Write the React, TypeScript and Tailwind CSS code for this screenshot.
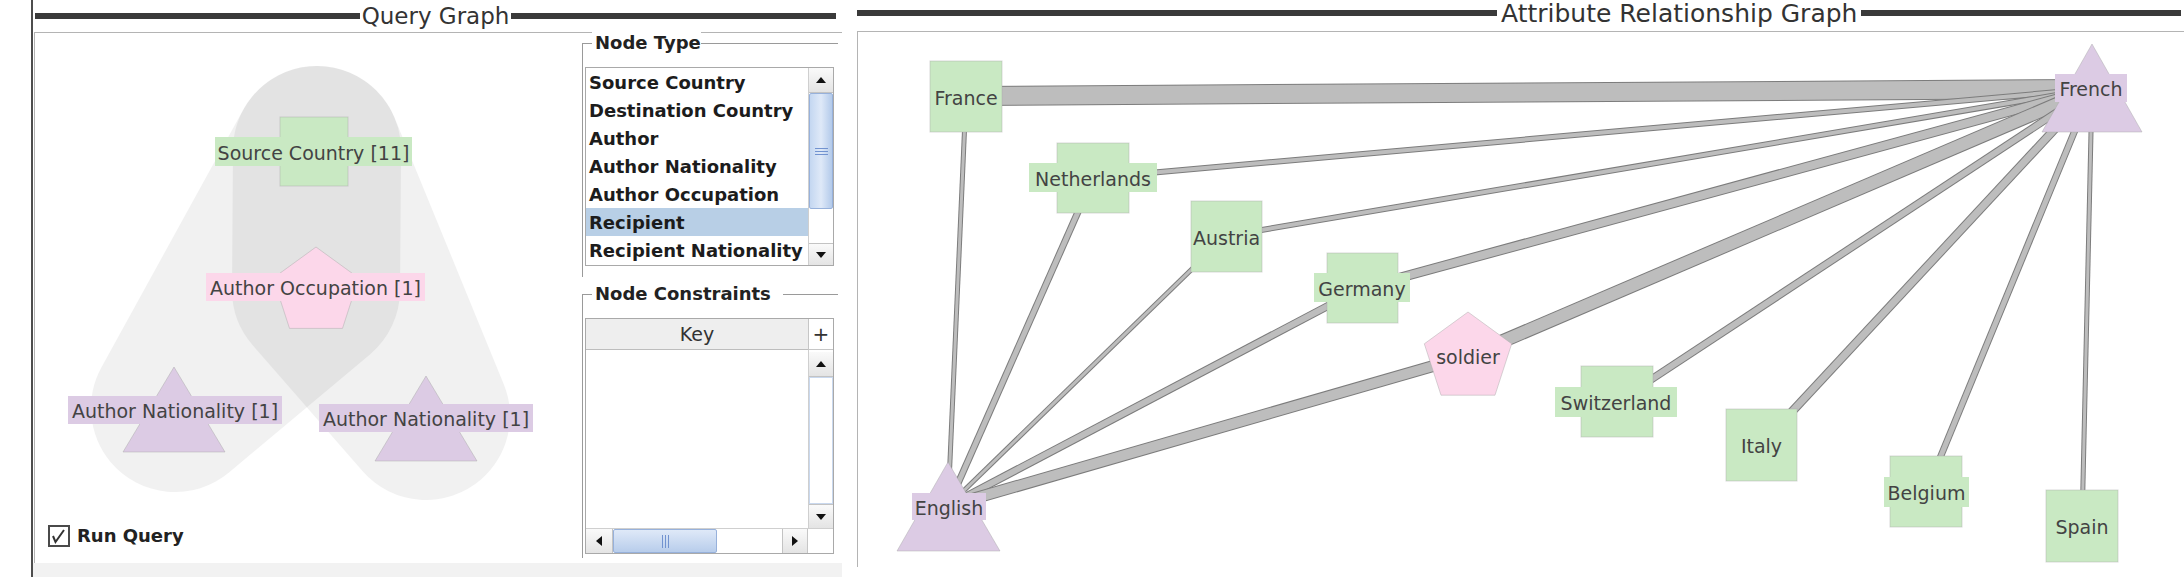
import React from "react";

const GREEN = "#c9e9c3";
const PINK = "#fcd7ea";
const PURPLE = "#dccbe4";
const OUTLINE = "#a9a9a9";
const INK = "#434343";

const pentagon = (cx: number, top: number, r: number) => {
  const cy = top + r;
  return [0, 1, 2, 3, 4]
    .map((i) => {
      const a = ((-90 + 72 * i) * Math.PI) / 180;
      return `${(cx + r * Math.cos(a)).toFixed(1)},${(cy + r * Math.sin(a)).toFixed(1)}`;
    })
    .join(" ");
};

const Label = ({
  x,
  y,
  w,
  h,
  fill,
  text,
}: {
  x: number;
  y: number;
  w: number;
  h: number;
  fill: string;
  text: string;
}) => (
  <>
    <rect x={x} y={y} width={w} height={h} fill={fill} />
    <text
      x={x + w / 2}
      y={y + h / 2 + 1}
      textAnchor="middle"
      dominantBaseline="central"
      fontSize="19"
      fill={INK}
    >
      {text}
    </text>
  </>
);

const Box = ({
  x,
  y,
  w,
  h,
  text,
  label,
}: {
  x: number;
  y: number;
  w: number;
  h: number;
  text: string;
  label?: [number, number, number, number];
}) => (
  <g>
    <rect x={x} y={y} width={w} height={h} fill={GREEN} stroke={OUTLINE} strokeOpacity="0.45" />
    {label ? (
      <Label x={label[0]} y={label[1]} w={label[2]} h={label[3]} fill={GREEN} text={text} />
    ) : (
      <text
        x={x + w / 2}
        y={y + h / 2 + 1}
        textAnchor="middle"
        dominantBaseline="central"
        fontSize="19"
        fill={INK}
      >
        {text}
      </text>
    )}
  </g>
);

const Triangle = ({ ax, ay, bx1, bx2, by }: { ax: number; ay: number; bx1: number; bx2: number; by: number }) => (
  <polygon
    points={`${ax},${ay} ${bx2},${by} ${bx1},${by}`}
    fill={PURPLE}
    stroke={OUTLINE}
    strokeOpacity="0.45"
  />
);

const QueryGraph = () => (
  <svg className="absolute inset-0 overflow-visible" width="547" height="480">
    <g transform="translate(-35 -33)">
      <g opacity="0.05">
        <polygon
          points="317,150 316,290 175,408"
          fill="#000"
          stroke="#000"
          strokeWidth="168"
          strokeLinejoin="round"
        />
      </g>
      <g opacity="0.05">
        <polygon
          points="317,150 316,290 426,416"
          fill="#000"
          stroke="#000"
          strokeWidth="168"
          strokeLinejoin="round"
        />
      </g>

      <rect x="280" y="117" width="68" height="69" fill={GREEN} stroke={OUTLINE} strokeOpacity="0.45" />
      <Label x={215} y={137} w={197} h={29} fill={GREEN} text="Source Country [11]" />

      <polygon points={pentagon(316, 247, 45)} fill={PINK} stroke={OUTLINE} strokeOpacity="0.45" />
      <Label x={206} y={273} w={219} h={28} fill={PINK} text="Author Occupation [1]" />

      <Triangle ax={174} ay={367} bx1={123} bx2={225} by={452} />
      <Label x={68} y={396} w={214} h={28} fill={PURPLE} text="Author Nationality [1]" />

      <Triangle ax={426} ay={376} bx1={375} bx2={477} by={461} />
      <Label x={319} y={404} w={214} h={28} fill={PURPLE} text="Author Nationality [1]" />
    </g>
  </svg>
);

const FR: [number, number] = [2092, 89];
const EN: [number, number] = [948, 506];

const edges: [number, number, number, number, number][] = [
  [966, 96, ...FR, 20],
  [1093, 178, ...FR, 6],
  [1226, 236, ...FR, 6],
  [1362, 288, ...FR, 10],
  [1468, 356, ...FR, 14],
  [1617, 402, ...FR, 8],
  [1761, 445, ...FR, 9],
  [1926, 492, ...FR, 7],
  [2082, 526, ...FR, 5],
  [...EN, 966, 96, 5],
  [...EN, 1093, 178, 7],
  [...EN, 1226, 236, 5],
  [...EN, 1362, 288, 8],
  [...EN, 1468, 356, 12],
];

const RelationshipGraph = () => (
  <svg className="absolute inset-0" width="1326" height="535">
    <g transform="translate(-858 -32)">
      {edges.map(([x1, y1, x2, y2, w], i) => (
        <g key={i}>
          <line x1={x1} y1={y1} x2={x2} y2={y2} stroke="#7c7c7c" strokeWidth={w} />
          <line x1={x1} y1={y1} x2={x2} y2={y2} stroke="#bdbdbd" strokeWidth={w - 2} />
        </g>
      ))}

      <Box x={930} y={61} w={72} h={71} text="France" />
      <Box x={1057} y={143} w={72} h={70} text="Netherlands" label={[1029, 163, 128, 29]} />
      <Box x={1191} y={201} w={71} h={71} text="Austria" />
      <Box x={1327} y={253} w={71} h={70} text="Germany" label={[1314, 273, 96, 29]} />
      <Box x={1581} y={366} w={72} h={71} text="Switzerland" label={[1555, 387, 122, 30]} />
      <Box x={1726} y={409} w={71} h={72} text="Italy" />
      <Box x={1890} y={456} w={72} h={71} text="Belgium" label={[1884, 477, 85, 30]} />
      <Box x={2046} y={490} w={72} h={72} text="Spain" />

      <polygon points={pentagon(1468, 312, 46)} fill={PINK} stroke={OUTLINE} strokeOpacity="0.45" />
      <text x="1468" y="357" textAnchor="middle" dominantBaseline="central" fontSize="19" fill={INK}>
        soldier
      </text>

      <Triangle ax={948} ay={462} bx1={897} bx2={1000} by={551} />
      <Label x={912} y={493} w={74} h={27} fill={PURPLE} text="English" />

      <Triangle ax={2092} ay={44} bx1={2042} bx2={2142} by={132} />
      <Label x={2055} y={74} w={72} h={28} fill={PURPLE} text="French" />
    </g>
  </svg>
);

const Arrow = ({ dir }: { dir: "up" | "down" | "left" | "right" }) => {
  const pts = {
    up: "1,7 6,1 11,7",
    down: "1,1 11,1 6,7",
    left: "7,1 7,11 1,6",
    right: "1,1 1,11 7,6",
  }[dir];
  const vertical = dir === "up" || dir === "down";
  return (
    <svg width={vertical ? 12 : 8} height={vertical ? 8 : 12}>
      <polygon points={pts} fill="#111" />
    </svg>
  );
};

const ScrollButton = ({ dir, className }: { dir: "up" | "down" | "left" | "right"; className: string }) => (
  <div className={`flex items-center justify-center bg-linear-to-b from-[#fafafa] to-[#e4e4e4] border-[#c3c3c3] ${className}`}>
    <Arrow dir={dir} />
  </div>
);

const Legend = ({ title, extra = "" }: { title: string; extra?: string }) => (
  <div className="h-[20px] flex items-stretch">
    <div className="w-[10px] h-[10px] self-end border-t border-l border-[#9a9a9a]" />
    <span className={`-mt-[1px] bg-white pl-[3px] flex items-center text-[18px] font-bold leading-none text-[#222] whitespace-nowrap ${extra}`}>
      {title}
    </span>
    <div className="flex-1 h-[10px] self-end border-t border-[#9a9a9a]" />
  </div>
);

const nodeTypes = [
  "Source Country",
  "Destination Country",
  "Author",
  "Author Nationality",
  "Author Occupation",
  "Recipient",
  "Recipient Nationality",
];

const NodeTypeList = () => (
  <div className="w-[249px] h-[199px] border border-[#a9a9a9] flex">
    <ul className="flex-1">
      {nodeTypes.map((t) => (
        <li
          key={t}
          className={`h-[28px] pl-[3px] flex items-center text-[18px] font-bold text-[#1c1c1c] whitespace-nowrap ${
            t === "Recipient" ? "bg-[#b8cfe6]" : ""
          }`}
        >
          {t}
        </li>
      ))}
    </ul>
    <div className="w-[25px] flex flex-col border-l border-[#cfcfcf]">
      <ScrollButton dir="up" className="h-[25px] border-b" />
      <div className="h-[116px] border border-[#97b1db] rounded-[2px] bg-linear-to-r from-[#c4d7f1] via-[#dfe9f8] to-[#b3caea] flex flex-col items-center justify-center gap-[2px]">
        <div className="w-[13px] h-px bg-[#7293d0]" />
        <div className="w-[13px] h-px bg-[#7293d0]" />
        <div className="w-[13px] h-px bg-[#7293d0]" />
      </div>
      <div className="flex-1 bg-white" />
      <ScrollButton dir="down" className="h-[22px] border-t" />
    </div>
  </div>
);

const ConstraintTable = () => (
  <div className="w-[249px] h-[236px] border border-[#a9a9a9] flex flex-col">
    <div className="h-[31px] flex">
      <div className="flex-1 bg-[#eeeeee] border-b border-[#bdbdbd] flex items-center justify-center text-[19px] text-[#333]">
        Key
      </div>
      <div className="w-[25px] border-l border-b border-[#c6c6c6] flex items-center justify-center text-[20px] leading-none text-[#333]">
        +
      </div>
    </div>
    <div className="flex-1 flex">
      <div className="flex-1 bg-white" />
      <div className="w-[25px] flex flex-col border-l border-[#cfcfcf] pt-[2px]">
        <ScrollButton dir="up" className="h-[25px] border-b" />
        <div className="flex-1 bg-white border border-[#c9d8ee]" />
        <ScrollButton dir="down" className="h-[24px] border-t" />
      </div>
    </div>
    <div className="h-[25px] flex border-t border-[#cfcfcf]">
      <ScrollButton dir="left" className="w-[27px] border-r" />
      <div className="w-[104px] border border-[#97b1db] rounded-[2px] bg-linear-to-b from-[#dfe9f8] to-[#b8cdeb] flex items-center justify-center gap-[2px]">
        <div className="h-[13px] w-px bg-[#7293d0]" />
        <div className="h-[13px] w-px bg-[#7293d0]" />
        <div className="h-[13px] w-px bg-[#7293d0]" />
      </div>
      <div className="flex-1 bg-white" />
      <ScrollButton dir="right" className="w-[25px] border-l" />
      <div className="w-[26px] border-l border-[#c6c6c6] bg-white" />
    </div>
  </div>
);

const Sidebar = () => (
  <div className="w-[260px] pr-[4px] flex flex-col">
    <Legend title="Node Type" />
    <div className="border-l border-[#9a9a9a] pl-[2px] pt-[14px] pb-[11px]">
      <NodeTypeList />
    </div>
    <div className="h-[7px]" />
    <Legend title="Node Constraints" extra="pr-[12px]" />
    <div className="border-l border-[#9a9a9a] pl-[2px] pt-[14px] pb-[4px]">
      <ConstraintTable />
    </div>
  </div>
);

const QueryPanel = () => (
  <section className="ml-[31px] w-[811px] h-full flex flex-col border-l-2 border-[#4d4d4d]">
    <div className="h-[32px] flex items-center pl-[2px] pr-[6px]">
      <div className="flex-1 h-[6px] bg-[#3a3a3a]" />
      <h2 className="px-[2px] text-[23px] leading-none text-[#333] whitespace-nowrap">Query Graph</h2>
      <div className="flex-1 h-[6px] bg-[#3a3a3a]" />
    </div>
    <div className="ml-[1px] h-[531px] flex border-l border-t border-[#b4b4b4]">
      <div className="w-[547px] flex flex-col">
        <div className="flex-1 relative">
          <QueryGraph />
        </div>
        <label className="h-[50px] flex items-start pt-[12px] pl-[13px] gap-[7px]">
          <svg width="22" height="22">
            <rect x="1" y="1" width="20" height="20" fill="#fff" stroke="#4a4a4a" strokeWidth="2" />
            <path d="M5 11 L7.5 17 L16 5" fill="none" stroke="#333" strokeWidth="2" />
          </svg>
          <span className="text-[18px] font-bold leading-[22px] text-[#222]">Run Query</span>
        </label>
      </div>
      <Sidebar />
    </div>
    <div className="flex-1 bg-[#f2f2f2]" />
  </section>
);

const RelationshipPanel = () => (
  <section className="ml-[15px] flex-1 flex flex-col">
    <div className="h-[26px] flex items-center pr-[3px]">
      <div className="w-[640px] h-[6px] bg-[#3a3a3a]" />
      <h2 className="px-[4px] text-[25px] leading-none text-[#333] whitespace-nowrap">
        Attribute Relationship Graph
      </h2>
      <div className="flex-1 h-[6px] bg-[#3a3a3a]" />
    </div>
    <div className="mt-[5px] h-[536px] relative border-l border-t border-[#b4b4b4]">
      <RelationshipGraph />
    </div>
  </section>
);

export default function App() {
  return (
    <div className="w-[2184px] h-[577px] overflow-hidden bg-white flex font-['DejaVu_Sans',sans-serif] text-[#333]">
      <QueryPanel />
      <RelationshipPanel />
    </div>
  );
}
